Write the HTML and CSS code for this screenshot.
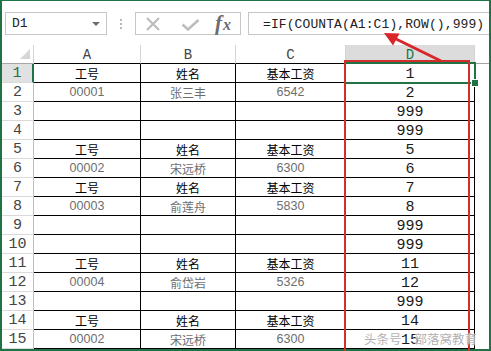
FILE: index.html
```html
<!DOCTYPE html>
<html lang="zh">
<head>
<meta charset="utf-8">
<title>Excel</title>
<link rel="stylesheet" href="styles.css">
</head>
<body>
<div class="wrap">
  <div class="frame">
    <div class="toolbar">
      <div class="namebox"><span class="nb-text">D1</span><span class="nb-arrow"></span></div>
      <div class="grip"><i></i><i></i><i></i></div>
      <div class="btns">
        <svg class="ic-x" width="16" height="14" viewBox="0 0 16 14"><path d="M2 1 L14 13 M14 1 L2 13" stroke="#bdbdbd" stroke-width="2.2" fill="none"/></svg>
        <svg class="ic-check" width="19" height="12" viewBox="0 0 19 12"><path d="M1.5 5.5 L7 10.5 L17.5 1" stroke="#bdbdbd" stroke-width="2.6" fill="none"/></svg>
        <span class="fx"><span class="f">f</span><span class="x">x</span></span>
      </div>
      <div class="formula">=IF(COUNTA(A1:C1),ROW(),999)</div>
    </div>
    <div class="sheet">
      <div class="corner"><span class="tri"></span></div>
      <div class="ch bk">A</div><div class="ch bk">B</div><div class="ch bk">C</div><div class="ch bk sel">D</div><div class="ch rest"></div>

      <div class="rh sel">1</div><div class="c hd">工号</div><div class="c hd">姓名</div><div class="c hd">基本工资</div><div class="c n">1</div><div class="e"></div>
      <div class="rh">2</div><div class="c dt">00001</div><div class="c dt cjk">张三丰</div><div class="c dt">6542</div><div class="c n">2</div><div class="e"></div>
      <div class="rh">3</div><div class="c"></div><div class="c"></div><div class="c"></div><div class="c n">999</div><div class="e"></div>
      <div class="rh">4</div><div class="c"></div><div class="c"></div><div class="c"></div><div class="c n">999</div><div class="e"></div>
      <div class="rh">5</div><div class="c hd">工号</div><div class="c hd">姓名</div><div class="c hd">基本工资</div><div class="c n">5</div><div class="e"></div>
      <div class="rh">6</div><div class="c dt">00002</div><div class="c dt cjk">宋远桥</div><div class="c dt">6300</div><div class="c n">6</div><div class="e"></div>
      <div class="rh">7</div><div class="c hd">工号</div><div class="c hd">姓名</div><div class="c hd">基本工资</div><div class="c n">7</div><div class="e"></div>
      <div class="rh">8</div><div class="c dt">00003</div><div class="c dt cjk">俞莲舟</div><div class="c dt">5830</div><div class="c n">8</div><div class="e"></div>
      <div class="rh">9</div><div class="c"></div><div class="c"></div><div class="c"></div><div class="c n">999</div><div class="e"></div>
      <div class="rh">10</div><div class="c"></div><div class="c"></div><div class="c"></div><div class="c n">999</div><div class="e"></div>
      <div class="rh">11</div><div class="c hd">工号</div><div class="c hd">姓名</div><div class="c hd">基本工资</div><div class="c n">11</div><div class="e"></div>
      <div class="rh">12</div><div class="c dt">00004</div><div class="c dt cjk">俞岱岩</div><div class="c dt">5326</div><div class="c n">12</div><div class="e"></div>
      <div class="rh">13</div><div class="c"></div><div class="c"></div><div class="c"></div><div class="c n">999</div><div class="e"></div>
      <div class="rh">14</div><div class="c hd">工号</div><div class="c hd">姓名</div><div class="c hd">基本工资</div><div class="c n">14</div><div class="e"></div>
      <div class="rh">15</div><div class="c dt">00002</div><div class="c dt cjk">宋远桥</div><div class="c dt">6300</div><div class="c n">15</div><div class="e"></div>
    </div>
  </div>
  <div class="selbox"><span class="handle"></span></div>
  <div class="redbox"></div>
  <svg class="arrow" width="491" height="351" viewBox="0 0 491 351">
    <line x1="441" y1="61" x2="393" y2="37.5" stroke="#d9262a" stroke-width="3"/>
    <polygon points="384,33 399.5,33.5 393,45.5" fill="#d9262a"/>
  </svg>
  <div class="watermark"><span>头条号</span><span class="gap"></span><span>部落窝教育</span></div>
</div>
</body>
</html>
```

FILE: styles.css
```css
* { box-sizing: border-box; }
html, body { margin: 0; padding: 0; background: #fff; }
.wrap {
  position: relative;
  width: 491px;
  height: 351px;
  overflow: hidden;
}
.frame {
  width: 491px;
  height: 351px;
  border-style: solid;
  border-color: #217346;
  border-width: 1px 2px 2px 2px;
  background: #fff;
  overflow: hidden;
}
.toolbar {
  height: 44px;
  display: flex;
  align-items: flex-start;
  padding: 11px 0 0 3px;
}
.namebox {
  width: 102px;
  height: 23px;
  border: 1px solid #c6c6c6;
  display: flex;
  align-items: center;
  padding-left: 6px;
  font: 13px "Liberation Mono", monospace;
  color: #222;
}
.nb-arrow {
  margin-left: auto;
  margin-right: 6px;
  width: 0;
  height: 0;
  border-left: 4px solid transparent;
  border-right: 4px solid transparent;
  border-top: 4px solid #6f6f6f;
}
.grip {
  margin-left: 13px;
  margin-top: 7px;
  display: flex;
  flex-direction: column;
  gap: 2px;
}
.grip i {
  display: block;
  width: 2px;
  height: 2px;
  background: #b8b8b8;
}
.btns {
  margin-left: 13px;
  width: 106px;
  height: 23px;
  border: 1px solid #c6c6c6;
  display: flex;
  align-items: center;
}
.ic-x { margin-left: 9px; }
.ic-check { margin-left: 20px; margin-top: 2px; }
.fx {
  margin-left: 15px;
  font-family: "Liberation Serif", serif;
  font-style: italic;
  font-weight: bold;
  color: #6b6b6b;
  display: flex;
  align-items: baseline;
}
.fx .f { font-size: 21px; }
.fx .x { font-size: 16px; margin-left: 1px; }
.formula {
  margin-left: 7px;
  flex: 1;
  height: 23px;
  border: 1px solid #c6c6c6;
  border-right: none;
  padding: 3px 0 0 14px;
  font: 13px "Liberation Mono", monospace;
  letter-spacing: 0.1px;
  color: #222;
  white-space: nowrap;
  line-height: 17px;
}
.sheet {
  display: grid;
  grid-template-columns: 32px 107px 95px 110px 129px 1fr;
  grid-auto-rows: 19px;
}
.corner {
  border-right: 1px solid #d4d4d4;
  border-bottom: 1px solid #a6a6a6;
  position: relative;
}
.tri {
  position: absolute;
  right: 3px;
  bottom: 4px;
  width: 0;
  height: 0;
  border-left: 10px solid transparent;
  border-bottom: 10px solid #d6d6d6;
}
.ch {
  border-right: 1px solid #d4d4d4;
  border-bottom: 1px solid #a6a6a6;
  font: 14px "Liberation Mono", monospace;
  color: #444;
  display: flex;
  align-items: center;
  justify-content: center;
  padding-top: 1px;
}
.ch.bk { border-bottom-color: #000; }
.ch.sel { background: #dcdcdc; color: #217346; }
.ch.rest { border-right: none; }
.rh {
  border-right: 1px solid #bdbdbd;
  border-bottom: 1px solid #dadada;
  font: 15px "Liberation Mono", monospace;
  color: #444;
  display: flex;
  align-items: center;
  justify-content: center;
  padding-top: 1px;
}
.rh.sel {
  background: #e1e1e1;
  color: #217346;
  border-right: 2px solid #217346;
}
.c {
  border-right: 1px solid #000;
  border-bottom: 1px solid #000;
  display: flex;
  align-items: center;
  justify-content: center;
  white-space: nowrap;
}
.hd {
  font: 12px "Noto Sans CJK SC", sans-serif;
  color: #000;
}
.dt {
  font: 12.5px "Liberation Sans", "Noto Sans CJK SC", sans-serif;
  color: #6e6e6e;
}
.dt.cjk { font: 12px "Noto Sans CJK SC", sans-serif; color: #6e6e6e; }
.n {
  font: 15px "Liberation Mono", monospace;
  color: #1a1a1a;
  padding-top: 2px;
}
.selbox {
  position: absolute;
  left: 344px;
  top: 62px;
  width: 132px;
  height: 22px;
  border: 2px solid #217346;
}
.handle {
  position: absolute;
  right: -4px;
  bottom: -4px;
  width: 6px;
  height: 6px;
  background: #217346;
  outline: 1px solid #fff;
}
.redbox {
  position: absolute;
  left: 344px;
  top: 60px;
  width: 126px;
  height: 300px;
  border: 2px solid #d02f2c;
}
.arrow {
  position: absolute;
  left: 0;
  top: 0;
}
.watermark {
  position: absolute;
  left: 364px;
  top: 331px;
  display: flex;
  font: 12.5px "Noto Sans CJK SC", sans-serif;
  color: rgba(150, 150, 150, 0.75);
  text-shadow: 0 0 2px #fff, 0 0 1px #fff;
  line-height: 15px;
  height: 15px;
}
.watermark .gap { width: 13px; }
```
